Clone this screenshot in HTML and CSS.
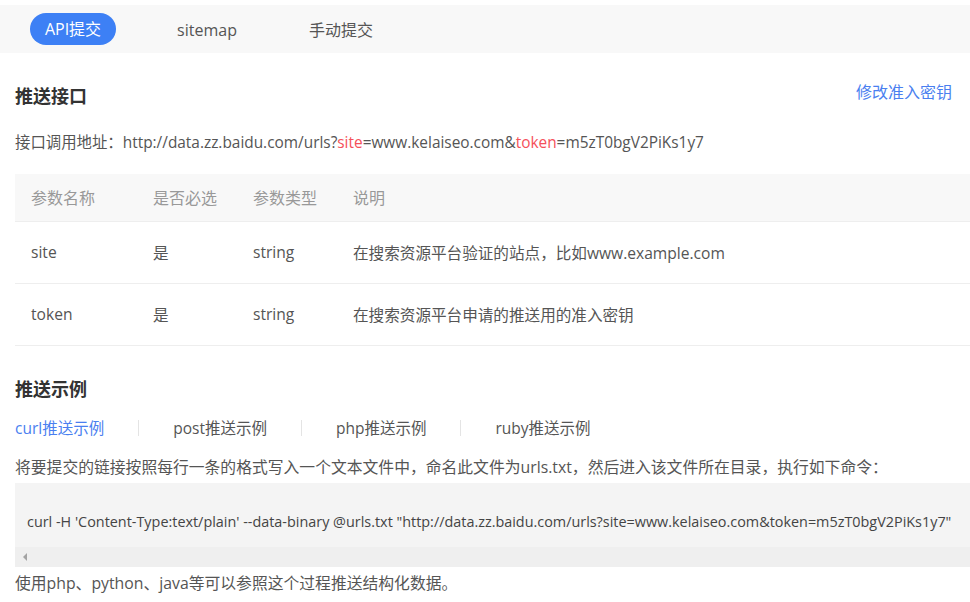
FILE: index.html
```html
<!DOCTYPE html>
<html lang="zh-CN">
<head>
<meta charset="utf-8">
<title>API提交</title>
<link rel="stylesheet" href="styles.css">
</head>
<body>
<nav class="tabs">
  <div class="tab"><span class="pill">API提交</span></div>
  <div class="tab">sitemap</div>
  <div class="tab">手动提交</div>
</nav>
<main class="content">
  <div class="section-head">
    <h2 class="title">推送接口</h2>
    <a class="link">修改准入密钥</a>
  </div>
  <p class="addr">接口调用地址：http://data.zz.baidu.com/urls?<span class="red">site</span>=www.kelaiseo.com&amp;<span class="red">token</span>=m5zT0bgV2PiKs1y7</p>
  <table class="params">
    <thead>
      <tr><th class="c1">参数名称</th><th class="c2">是否必选</th><th class="c3">参数类型</th><th>说明</th></tr>
    </thead>
    <tbody>
      <tr><td>site</td><td>是</td><td>string</td><td>在搜索资源平台验证的站点，比如www.example.com</td></tr>
      <tr><td>token</td><td>是</td><td>string</td><td>在搜索资源平台申请的推送用的准入密钥</td></tr>
    </tbody>
  </table>
  <h2 class="title title2">推送示例</h2>
  <div class="subtabs">
    <span class="sub active">curl推送示例</span>
    <span class="sep"></span>
    <span class="sub">post推送示例</span>
    <span class="sep"></span>
    <span class="sub">php推送示例</span>
    <span class="sep"></span>
    <span class="sub">ruby推送示例</span>
  </div>
  <p class="desc">将要提交的链接按照每行一条的格式写入一个文本文件中，命名此文件为urls.txt，然后进入该文件所在目录，执行如下命令：</p>
  <div class="code">
    <pre class="code-text">curl -H 'Content-Type:text/plain' --data-binary @urls.txt "http://data.zz.baidu.com/urls?site=www.kelaiseo.com&amp;token=m5zT0bgV2PiKs1y7"</pre>
    <div class="scrollbar"><span class="arrow"></span></div>
  </div>
  <p class="desc foot">使用php、python、java等可以参照这个过程推送结构化数据。</p>
</main>
</body>
</html>
```
FILE: styles.css
```css
* { box-sizing: border-box; }
html, body {
  margin: 0;
  padding: 0;
  background: #fff;
  font-family: "Open Sans", "Noto Sans CJK SC", sans-serif;
  color: #555;
  overflow: hidden;
}
.tabs {
  margin-top: 5px;
  height: 48px;
  background: #f8f8f8;
  display: flex;
  align-items: center;
  padding-left: 6px;
}
.tab {
  width: 134px;
  display: flex;
  justify-content: center;
  align-items: center;
  font-size: 16px;
  line-height: 22px;
  padding-top: 2px;
  color: #555;
}
.pill {
  display: inline-flex;
  align-items: center;
  height: 32px;
  margin-top: -2px;
  padding: 0 15px;
  border-radius: 16px;
  background: #3d80f5;
  color: #fff;
}
.content {
  padding-left: 15px;
}
.section-head {
  display: flex;
  justify-content: space-between;
  align-items: flex-start;
  margin-top: 31px;
}
.title {
  margin: 0;
  font-size: 18px;
  line-height: 24px;
  font-weight: bold;
  color: #333;
}
.link {
  font-size: 16px;
  line-height: 20px;
  color: #4a7ff0;
  margin-right: 18px;
  margin-top: -2px;
}
.addr {
  margin: 24px 0 0;
  font-size: 15.4px;
  line-height: 22px;
  color: #555;
}
.red { color: #f5505a; }
.params {
  width: 100%;
  border-collapse: collapse;
  margin-top: 20px;
  font-size: 15.6px;
}
.params th {
  background: #f8f8f8;
  height: 47px;
  text-align: left;
  font-weight: normal;
  font-size: 16px;
  color: #999;
  padding: 0 0 0 16px;
  border-bottom: 1px solid #eee;
}
.params th.c1 { width: 138px; }
.params th.c2 { width: 100px; padding-left: 0; }
.params th.c3 { width: 100px; padding-left: 0; }
.params th:last-child { padding-left: 0; }
.params td {
  height: 62px;
  padding: 0;
  border-bottom: 1px solid #eee;
  color: #555;
}
.params td:first-child { padding-left: 16px; }
.title2 { margin-top: 31px; }
.subtabs {
  display: flex;
  align-items: center;
  margin-top: 16px;
  font-size: 15.5px;
  line-height: 22px;
}
.sub { color: #555; }
.sub.active { color: #4a7ff0; }
.sep {
  width: 1px;
  height: 16px;
  background: #e4e4e4;
  margin: 0 34px;
}
.desc {
  margin: 17px 0 0;
  font-size: 15.8px;
  line-height: 22px;
  color: #555;
}
.code {
  margin-top: 5px;
  background: #f4f4f4;
}
.code-text {
  margin: 0;
  padding: 28px 0 14px 12px;
  font-family: "Open Sans", "Noto Sans CJK SC", sans-serif;
  font-size: 14.4px;
  line-height: 22px;
  color: #444;
  white-space: pre;
}
.scrollbar {
  height: 20px;
  background: #efefef;
  display: flex;
  align-items: center;
  padding-left: 8px;
}
.arrow {
  width: 0;
  height: 0;
  border-top: 4px solid transparent;
  border-bottom: 4px solid transparent;
  border-right: 4px solid #a3a3a3;
}
.foot { margin-top: 5px; }
```
